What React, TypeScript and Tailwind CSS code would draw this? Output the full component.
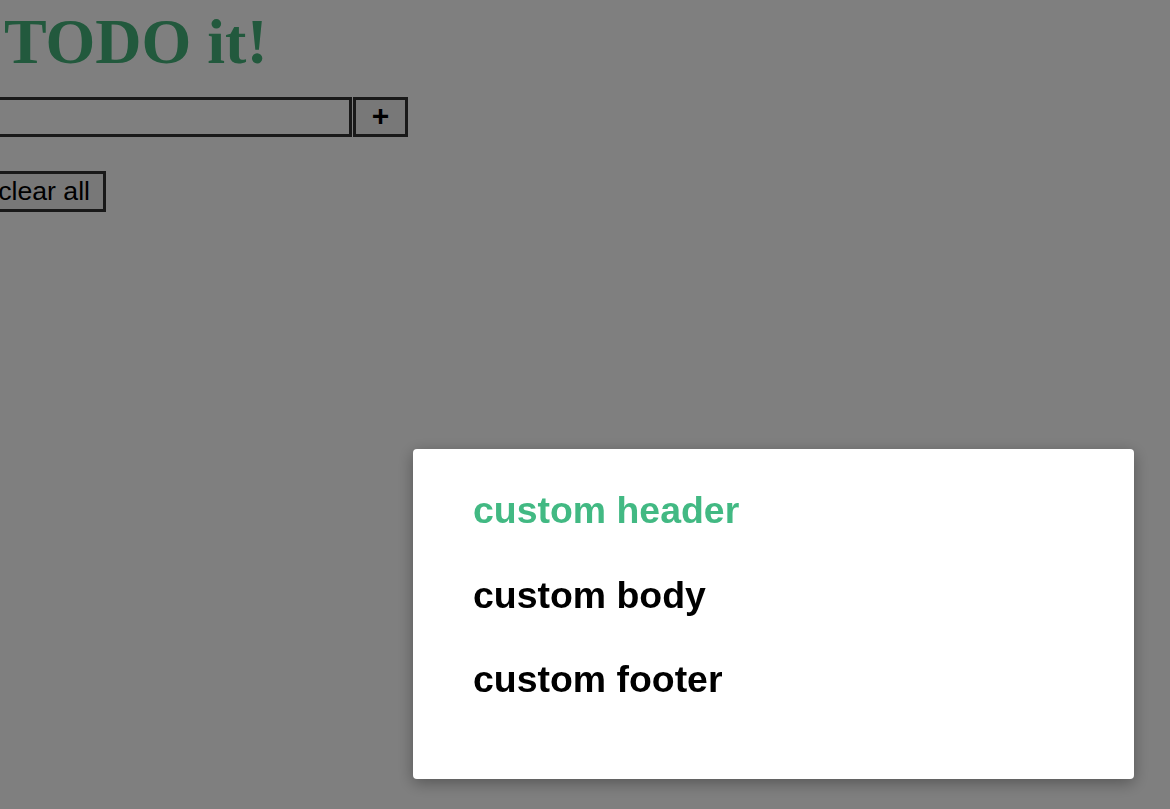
import { useState } from "react";

function App() {
  const [text, setText] = useState("");
  const [open] = useState(true);

  return (
    <div className="relative min-h-screen bg-white font-['Liberation_Sans',Arial,sans-serif] text-black overflow-hidden">
      <h1 className="ml-[4px] pt-[6px] font-['Liberation_Serif','Times_New_Roman',serif] text-[64px] leading-[71px] font-bold text-[#45b37a]">
        TODO it!
      </h1>
      <div className="-ml-[18px]">
        <div className="mt-[20px] flex gap-[1px]">
          <input
            type="text"
            value={text}
            onChange={(ev) => setText(ev.currentTarget.value)}
            className="w-[370px] h-[40px] border-[3px] border-[#333] bg-white px-2 text-[26px] outline-none"
          />
          <button className="w-[55px] h-[40px] border-[3px] border-[#333] bg-[#f0f0f0] text-[30px] font-bold leading-none flex items-center justify-center pb-[3px]">
            +
          </button>
        </div>
        <button className="mt-[34px] w-[124px] h-[41px] border-[3px] border-[#333] bg-[#f0f0f0] text-[26.67px] leading-none flex items-center justify-end pr-[13px]">
          clear all
        </button>
      </div>

      {open && (
        <div className="fixed inset-0 bg-black/50 flex items-start pl-[413px] pt-[449px]">
          <div className="w-[721px] h-[330px] bg-white rounded-[4px] shadow-[0_4px_16px_rgba(0,0,0,0.33)] px-[60px] pt-[40px] flex flex-col gap-[42.5px]">
            <h3 className="text-[37.44px] leading-[42px] font-bold text-[#42b983]">custom header</h3>
            <h3 className="text-[37.44px] leading-[42px] font-bold">custom body</h3>
            <h3 className="text-[37.44px] leading-[42px] font-bold">custom footer</h3>
          </div>
        </div>
      )}
    </div>
  );
}

export default App;
